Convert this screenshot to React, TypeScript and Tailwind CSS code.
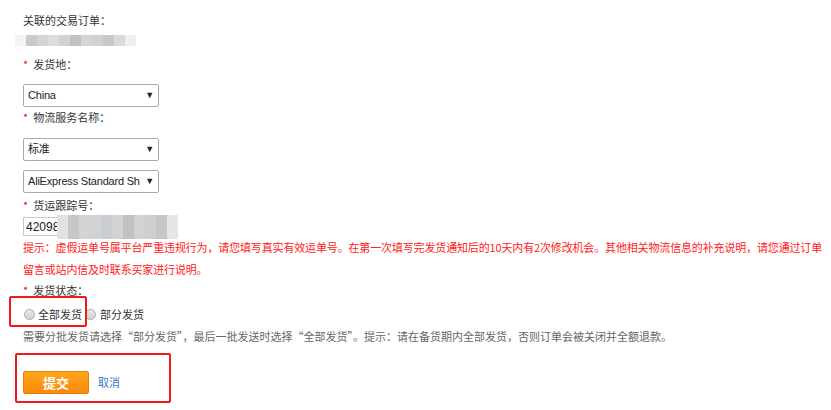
const strip1 = ["#f4f4f4", "#c9cacc", "#d6d4d1", "#dcdcdc", "#cfd3d4", "#c2c2c2", "#d7d5d3", "#d1d1d1", "#c8c8ca", "#dadada", "#efefef"];
const strip2 = ["#e2e2e2", "#c7c7c7", "#d4d4d4", "#d0d2d4", "#c9ccd0", "#d3d3d3", "#bfc3c8", "#d2d2d2", "#cfcfcf", "#c6c6c6", "#e6e6e6"];

const Label = ({ text, required }: { text: string; required?: boolean }) => (
  <div className="flex h-[20px] items-center text-[11px] text-[#333]">
    {required ? <span className="mr-[5px] text-[#f00]">*</span> : null}
    <span>{text}</span>
  </div>
);

const Select = ({ value, className }: { value: string; className?: string }) => (
  <div
    className={`flex h-[23px] w-[136px] items-center justify-between rounded-[2px] border border-[#a9a9a9] bg-white pl-[4px] pr-[4px] text-[11px] tracking-[-0.2px] text-[#222] ${className ?? ""}`}
    style={{ fontFamily: '"Liberation Sans", "Noto Sans CJK SC", sans-serif' }}
  >
    <span className="whitespace-nowrap">{value}</span>
    <span className="ml-[1px] text-[9px] leading-none">▼</span>
  </div>
);

const Radio = () => (
  <span className="inline-block h-[11px] w-[11px] rounded-full border border-[#a8a8a8] bg-gradient-to-b from-[#e9e9e9] to-[#d2d2d2]" />
);

export default function App() {
  return (
    <div
      className="relative h-[410px] w-[831px] overflow-hidden bg-white pl-[23px]"
      style={{ fontFamily: '"Noto Sans CJK SC", "Liberation Sans", sans-serif' }}
    >
      <div className="mt-[10px]">
        <Label text="关联的交易订单：" />
      </div>
      <div className="-ml-[8px] mt-[5px] flex h-[11px]">
        {strip1.map((c, i) => (
          <span key={i} className="h-full w-[11px]" style={{ backgroundColor: c }} />
        ))}
      </div>
      <div className="mt-[8px]">
        <Label text="发货地：" required />
      </div>
      <Select value="China" className="mt-[10px]" />
      <Label text="物流服务名称：" required />
      <Select value="标准" className="mt-[11px]" />
      <Select value="AliExpress Standard Sh" className="mt-[9px]" />
      <div className="mt-[2px]">
        <Label text="货运跟踪号：" required />
      </div>
      <div className="relative mt-[2px] h-[19px] w-[150px]">
        <div
          className="flex h-full items-center border border-[#c8c8c8] pl-[2px] text-[12px] text-[#222]"
          style={{ fontFamily: '"Liberation Sans", sans-serif' }}
        >
          42098
        </div>
        <div className="absolute left-[34px] top-[-2px] flex h-[24px]">
          {strip2.map((c, i) => (
            <span key={i} className="h-full w-[11px]" style={{ backgroundColor: c }} />
          ))}
        </div>
      </div>
      <p className="w-[800px] text-[11px] leading-[22px] tracking-[-0.15px] text-[#ff2020]">
        提示：虚假运单号属平台严重违规行为，请您填写真实有效运单号。在第一次填写完发货通知后的10天内有2次修改机会。其他相关物流信息的补充说明，请您通过订单留言或站内信及时联系买家进行说明。
      </p>
      <Label text="发货状态：" required />
      <div className="relative mt-[4px] flex h-[20px] items-center text-[11px] text-[#333]">
        <div className="pointer-events-none absolute left-[-14px] top-[-8px] h-[31px] w-[78px] rounded-[2px] border-2 border-[#f01818]" />
        <div className="ml-[1px] flex items-center">
          <Radio />
          <span className="ml-[3px]">全部发货</span>
        </div>
        <div className="ml-[3px] flex items-center">
          <Radio />
          <span className="ml-[4px]">部分发货</span>
        </div>
      </div>
      <div className="mt-[2px] flex h-[20px] items-center text-[11px] text-[#666]">
        需要分批发货请选择“部分发货”，最后一批发送时选择“全部发货”。提示：请在备货期内全部发货，否则订单会被关闭并全额退款。
      </div>
      <div className="relative mt-[25px] flex items-center">
        <div className="pointer-events-none absolute left-[-8px] top-[-18px] h-[50px] w-[156px] rounded-[2px] border-2 border-[#f01818]" />
        <button className="h-[23px] w-[66px] rounded-[2px] border border-[#ec7f0a] bg-gradient-to-b from-[#ffa51c] to-[#f88a0d] text-[13px] font-bold text-white">
          提交
        </button>
        <a className="ml-[9px] text-[11px] text-[#3b78c6]">取消</a>
      </div>
    </div>
  );
}
